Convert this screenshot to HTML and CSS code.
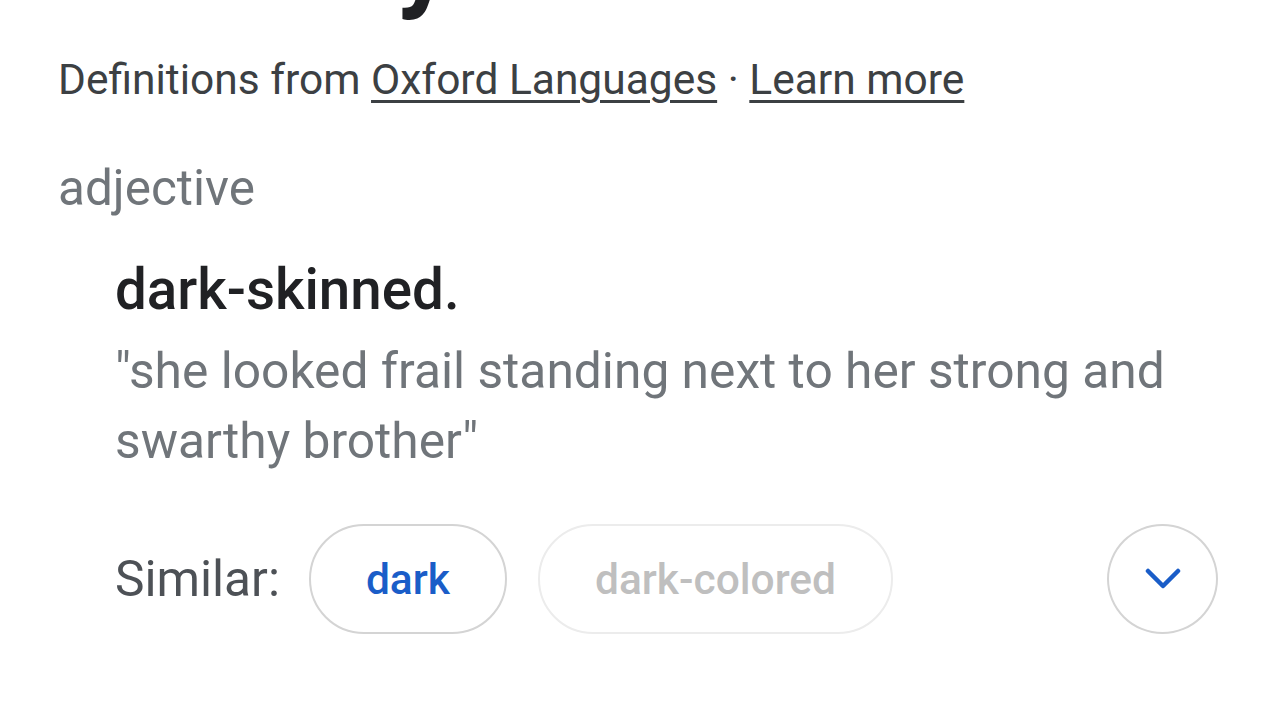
FILE: index.html
```html
<!DOCTYPE html>
<html lang="en">
<head>
<meta charset="utf-8">
<title>swarthy</title>
<link rel="stylesheet" href="styles.css">
</head>
<body>
<div class="entry">
  <div class="headword">swarthy</div>
  <div class="source">Definitions from <a class="link" href="#">Oxford Languages</a> · <a class="link" href="#">Learn more</a></div>
  <div class="pos">adjective</div>
  <div class="sense">
    <div class="definition">dark-skinned.</div>
    <div class="example">"she looked frail standing next to her strong and swarthy brother"</div>
    <div class="similar">
      <span class="similar-label">Similar:</span>
      <span class="chip chip-active">dark</span>
      <span class="chip chip-faded">dark-colored</span>
      <span class="spacer"></span>
      <button class="expand" aria-label="More">
        <svg width="36" height="22" viewBox="0 0 36 22"><path d="M3 3 L18 18 L33 3" fill="none" stroke="#1a5dc8" stroke-width="4.5" stroke-linecap="round" stroke-linejoin="round"/></svg>
      </button>
    </div>
  </div>
</div>
</body>
</html>
```
FILE: styles.css
```css
html, body {
  margin: 0;
  padding: 0;
  background: #ffffff;
  overflow: hidden;
}
body {
  width: 1280px;
  height: 720px;
  font-family: Roboto, "Liberation Sans", Arial, sans-serif;
}
.entry {
  padding-left: 58px;
  padding-right: 62px;
}
.headword {
  font-size: 110px;
  line-height: 111px;
  font-weight: 700;
  color: #202124;
  margin-top: -96px;
  height: 111px;
}
.source {
  margin-top: 40px;
  font-size: 42.5px;
  line-height: 50px;
  color: #3c4043;
}
.link {
  color: #3c4043;
  text-decoration: underline;
  text-underline-offset: 6px;
  text-decoration-thickness: 2.5px;
}
.pos {
  margin-top: 53px;
  font-size: 49.5px;
  line-height: 60px;
  color: #70757a;
}
.sense {
  padding-left: 57px;
}
.definition {
  margin-top: 40px;
  font-size: 56.5px;
  line-height: 64px;
  font-weight: 500;
  color: #202124;
}
.example {
  margin-top: 14px;
  font-size: 49.7px;
  line-height: 70px;
  color: #70757a;
}
.similar {
  margin-top: 48px;
  display: flex;
  align-items: center;
  height: 110px;
}
.similar-label {
  font-size: 49.6px;
  color: #4d5156;
  margin-right: 29px;
}
.chip {
  box-sizing: border-box;
  height: 110px;
  border-radius: 55px;
  display: inline-flex;
  align-items: center;
  padding: 0 55px;
  font-size: 42.5px;
  font-weight: 500;
}
.chip-active {
  border: 2px solid #d4d4d4;
  color: #1a5dc8;
  margin-right: 31px;
}
.chip-faded {
  border: 2px solid #ececec;
  color: #bfbfbf;
}
.spacer {
  flex: 1;
}
.expand {
  box-sizing: border-box;
  width: 111px;
  height: 110px;
  border-radius: 50%;
  border: 2px solid #d4d4d4;
  background: #ffffff;
  display: flex;
  align-items: center;
  justify-content: center;
  padding: 0;
}
.expand svg {
  display: block;
}
```
